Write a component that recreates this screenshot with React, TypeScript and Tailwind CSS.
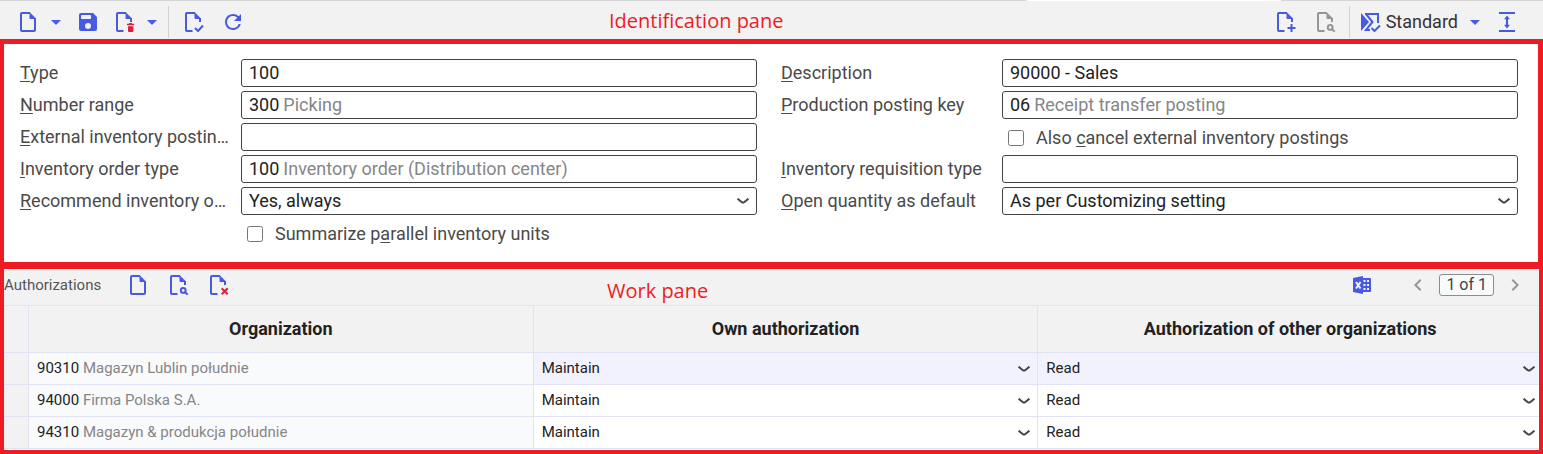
import type { ReactNode } from "react";
import { MdArrowDropDown, MdChevronLeft, MdChevronRight, MdRefresh } from "react-icons/md";
import { clsx } from "clsx";

type Badge = "trash" | "check" | "plus" | "search" | "cross";

// How far the page outline runs before it makes room for the badge
const BADGED_PAGE = "M10 1H2Q1 1 1 2V18Q1 19 2 19H7.5M15 6V10";
const FULL_PAGE = "M10 1H2Q1 1 1 2V18Q1 19 2 19H14Q15 19 15 18V6";

function PageIcon({ badge }: { badge?: Badge }) {
  return (
    <svg viewBox="0 0 20 20" className="size-5" fill="none" stroke="currentColor" strokeWidth="2">
      <path d={badge ? BADGED_PAGE : FULL_PAGE} />
      <path d="M9.5 0 16 6.5V7H10.5Q9.5 7 9.5 6Z" fill="currentColor" stroke="none" />
      {badge === "trash" && (
        <path
          d="M13.2 11h2.8v.8h2.2v1.5h-7.2v-1.5h2.2ZM12 14.2h5.4V19q0 1-1 1h-3.4q-1 0-1-1Z"
          fill="#dc1f3c"
          stroke="none"
        />
      )}
      {badge === "check" && <path d="m10 16 3 3 5-5.5" />}
      {badge === "plus" && <path d="M14.5 12v8M10.5 16h8" />}
      {badge === "search" && (
        <>
          <circle cx="13.2" cy="15.4" r="2.4" />
          <path d="m15 17.2 2.8 2.5" />
        </>
      )}
      {badge === "cross" && <path d="m11.7 13.3 6 6M17.7 13.3l-6 6" stroke="#dc1f3c" />}
    </svg>
  );
}

function SaveIcon() {
  return (
    <svg viewBox="0 0 18 18" className="size-[18px]" fill="currentColor">
      <path
        fillRule="evenodd"
        d="M2 0h12l4 4v12q0 2-2 2H2q-2 0-2-2V2Q0 0 2 0ZM3 2q-1 0-1 1v2q0 1 1 1h8q1 0 1-1V3q0-1-1-1ZM9 10a3 3 0 1 0 0 6 3 3 0 0 0 0-6Z"
      />
    </svg>
  );
}

function LayoutIcon() {
  return (
    <svg viewBox="0 0 20 20" className="size-5" fill="none" stroke="currentColor" strokeWidth="2">
      <path d="M0 1 8 10 0 19Z" fill="currentColor" stroke="none" />
      <path d="M4 2H17V11M5 2 11.5 10 5 18H9" />
      <path d="m10.5 16 3 3 5.5-5.5" />
    </svg>
  );
}

function ExpandIcon() {
  return (
    <svg viewBox="0 0 16 20" className="h-5 w-4" fill="none" stroke="currentColor" strokeWidth="2">
      <path d="M0 1H16M0 19H16M8 5V15" />
      <path d="M8 3.5 11 7.2H5ZM8 16.5 5 12.8H11Z" fill="currentColor" stroke="none" />
    </svg>
  );
}

function ExcelIcon() {
  return (
    <svg viewBox="0 0 18 18" className="size-[18px]" fill="none">
      <path d="M0 2 10 0V18L0 16Z" fill="currentColor" />
      <path d="M10 2H17Q18 2 18 3V15Q18 16 17 16H10Z" fill="currentColor" />
      <path d="M10.5 4h2v2h-2ZM14 4h2v2h-2ZM10.5 8h2v2h-2ZM14 8h2v2h-2ZM10.5 12h2v2h-2ZM14 12h2v2h-2Z" fill="#f2f2f2" />
      <path d="m3 6 4.5 6.500M7.500 6l-4.500 6.500" stroke="#f2f2f2" strokeWidth="2" />
    </svg>
  );
}

function Chevron() {
  return (
    <svg viewBox="0 0 12 6" className="h-1.5 w-3" fill="none" stroke="#444" strokeWidth="2">
      <path d="M.5.7 4.9 4.2Q6 5 7.1 4.2L11.5.7" />
    </svg>
  );
}

interface IconButtonProps {
  label: string;
  className?: string;
  disabled?: boolean;
  children: ReactNode;
}

function IconButton({ label, className, disabled, children }: IconButtonProps) {
  return (
    <button
      type="button"
      aria-label={label}
      disabled={disabled}
      className={clsx("flex shrink-0 items-center", disabled ? "text-[#969696]" : "text-[#4859e2]", className)}
    >
      {children}
    </button>
  );
}

function Toolbar() {
  return (
    <header className="relative flex h-[39px] items-center border-t border-[#d6d6d6] bg-[#f2f2f2] pt-1 pr-7 pl-5">
      {/* Gap in the top rule, under the open tab */}
      <div className="absolute -top-px right-[262px] h-px w-[254px] bg-white" />

      <IconButton label="New"><PageIcon /></IconButton>
      <IconButton label="New options" className="ml-1"><MdArrowDropDown size={24} /></IconButton>
      <IconButton label="Save" className="ml-[11px]"><SaveIcon /></IconButton>
      <IconButton label="Delete" className="ml-[19px]"><PageIcon badge="trash" /></IconButton>
      <IconButton label="Delete options" className="ml-1"><MdArrowDropDown size={24} /></IconButton>
      <div className="ml-1 h-8 w-px bg-[#d0d0d0]" />
      <IconButton label="Validate" className="ml-4"><PageIcon badge="check" /></IconButton>
      <IconButton label="Refresh" className="ml-4"><MdRefresh size={24} /></IconButton>

      <span className="absolute top-2 left-[609px] font-[Open_Sans] text-xl leading-6 text-[#ed1c24]">
        Identification pane
      </span>

      <IconButton label="Add" className="ml-auto"><PageIcon badge="plus" /></IconButton>
      <IconButton label="Find" disabled className="ml-5"><PageIcon badge="search" /></IconButton>
      <div className="ml-3 h-8 w-px bg-[#d0d0d0]" />
      <button type="button" className="ml-[11px] flex items-center text-lg text-[#333]">
        <span className="mr-[5px] text-[#4859e2]"><LayoutIcon /></span>
        Standard
        <MdArrowDropDown size={24} className="ml-[5px] text-[#4859e2]" />
      </button>
      <IconButton label="Expand" className="ml-3"><ExpandIcon /></IconButton>
    </header>
  );
}

/** Text with its access key underlined. */
function KeyedText({ text, keyIndex = 0 }: { text: string; keyIndex?: number }) {
  return (
    <>
      {text.slice(0, keyIndex)}
      <span className="underline underline-offset-2">{text[keyIndex]}</span>
      {text.slice(keyIndex + 1)}
    </>
  );
}

interface FieldProps {
  id: string;
  label: string;
  children: ReactNode;
}

function Field({ id, label, children }: FieldProps) {
  return (
    <div className="flex h-7 items-center">
      <label htmlFor={id} className="w-[221px] shrink-0 truncate pr-3 text-[#4a4a4a]">
        <KeyedText text={label} />
      </label>
      <div className="relative flex h-7 min-w-0 flex-1 items-center rounded-[3px] border border-[#444] bg-white">
        {children}
      </div>
    </div>
  );
}

function TextField({ id, label, value = "", hint }: { id: string; label: string; value?: string; hint?: string }) {
  return (
    <Field id={id} label={label}>
      <input
        id={id}
        defaultValue={value}
        className={clsx("h-full bg-transparent pb-0.5 pl-[7px] outline-none", hint ? "field-sizing-content" : "w-full")}
      />
      {hint && <span className="truncate pl-1 text-[#868686]">{hint}</span>}
    </Field>
  );
}

function SelectField({ id, label, value }: { id: string; label: string; value: string }) {
  return (
    <Field id={id} label={label}>
      <select id={id} className="h-full w-full appearance-none bg-transparent pl-[7px] outline-none">
        <option>{value}</option>
      </select>
      <span className="pointer-events-none absolute right-[7px]"><Chevron /></span>
    </Field>
  );
}

function CheckField({ id, label, keyIndex }: { id: string; label: string; keyIndex: number }) {
  return (
    <div className="flex h-7 items-center gap-3 pt-0.5 pl-[227px]">
      <input id={id} type="checkbox" className="size-4 shrink-0" />
      <label htmlFor={id} className="truncate text-[#4a4a4a]">
        <KeyedText text={label} keyIndex={keyIndex} />
      </label>
    </div>
  );
}

function IdentificationPane() {
  return (
    <section className="border-4 border-t-[5px] border-r-[5px] border-b-0 border-[#ed1c24] bg-white">
      <form className="grid grid-cols-2 gap-x-6 py-[15px] pr-5 pl-4 text-lg leading-6 text-[#222]">
        <div className="flex min-w-0 flex-col gap-1">
          <TextField id="type" label="Type" value="100" />
          <TextField id="range" label="Number range" value="300" hint="Picking" />
          <TextField id="external" label="External inventory posting key" />
          <TextField id="order-type" label="Inventory order type" value="100" hint="Inventory order (Distribution center)" />
          <SelectField id="recommend" label="Recommend inventory order" value="Yes, always" />
          <CheckField id="summarize" label="Summarize parallel inventory units" keyIndex={11} />
        </div>
        <div className="flex min-w-0 flex-col gap-1">
          <TextField id="description" label="Description" value="90000 - Sales" />
          <TextField id="posting-key" label="Production posting key" value="06" hint="Receipt transfer posting" />
          <CheckField id="cancel" label="Also cancel external inventory postings" keyIndex={5} />
          <TextField id="requisition" label="Inventory requisition type" />
          <SelectField id="open-quantity" label="Open quantity as default" value="As per Customizing setting" />
        </div>
      </form>
    </section>
  );
}

const ROWS = [
  { code: "90310", name: "Magazyn Lublin południe", own: "Maintain", other: "Read" },
  { code: "94000", name: "Firma Polska S.A.", own: "Maintain", other: "Read" },
  { code: "94310", name: "Magazyn & produkcja południe", own: "Maintain", other: "Read" },
];

const CELL = "border-r border-b border-[#e1e1f7]";

function SelectCell({ label, value, selected }: { label: string; value: string; selected: boolean }) {
  return (
    <td className={clsx(CELL, "h-8 p-0", selected ? "bg-[#f2f2ff]" : "bg-white")}>
      <div className="relative flex items-center">
        <select aria-label={label} className="h-[31px] w-full appearance-none bg-transparent pl-2 outline-none">
          <option>{value}</option>
        </select>
        <span className="pointer-events-none absolute right-[7px]"><Chevron /></span>
      </div>
    </td>
  );
}

function WorkPane() {
  return (
    <section className="relative overflow-hidden border-4 border-t-[7px] border-[#ed1c24] bg-white pb-px text-[15px] text-[#222]">
      <div className="flex h-9 items-center bg-[#f2f2f2] pr-3 pb-1">
        <h2 className="text-[#555]">Authorizations</h2>
        <IconButton label="New row" className="ml-[29px]"><PageIcon /></IconButton>
        <IconButton label="Find row" className="ml-5"><PageIcon badge="search" /></IconButton>
        <IconButton label="Delete row" className="ml-5"><PageIcon badge="cross" /></IconButton>

        <span className="absolute top-2.5 left-[603px] font-[Open_Sans] text-xl leading-6 text-[#ed1c24]">
          Work pane
        </span>

        <IconButton label="Export to Excel" className="ml-auto"><ExcelIcon /></IconButton>
        <IconButton label="Previous page" disabled className="ml-[35px]"><MdChevronLeft size={24} /></IconButton>
        <span className="mx-[9px] rounded-[3px] border border-[#8c8c8c] bg-[#f8fafc] px-1.5 text-base leading-5 text-[#444]">
          1 of 1
        </span>
        <IconButton label="Next page" disabled><MdChevronRight size={24} /></IconButton>
      </div>

      {/* The last column runs a little under the frame */}
      <table className="w-[calc(100%+4px)] table-fixed border-separate border-spacing-0 border-t border-[#e1e1f7]">
        <thead className="bg-[#f2f2f2] text-lg">
          <tr className="h-[47px]">
            <th className={clsx(CELL, "w-[25px] p-0")} />
            <th className={CELL}>Organization</th>
            <th className={CELL}>Own authorization</th>
            <th className={CELL}>Authorization of other organizations</th>
          </tr>
        </thead>
        <tbody>
          {ROWS.map((row, i) => (
            <tr key={row.code}>
              <td className={clsx(CELL, "bg-[#f2f2f2] p-0")} />
              <td className={clsx(CELL, "truncate bg-[#f8fafc] py-0 pr-0 pl-2")}>
                {row.code} <span className="text-[#868686]">{row.name}</span>
              </td>
              <SelectCell label={`Own authorization ${row.code}`} value={row.own} selected={i === 0} />
              <SelectCell label={`Other authorization ${row.code}`} value={row.other} selected={i === 0} />
            </tr>
          ))}
        </tbody>
      </table>
    </section>
  );
}

export default function App() {
  return (
    <div className="font-[Roboto,sans-serif]">
      <Toolbar />
      <IdentificationPane />
      <WorkPane />
    </div>
  );
}
